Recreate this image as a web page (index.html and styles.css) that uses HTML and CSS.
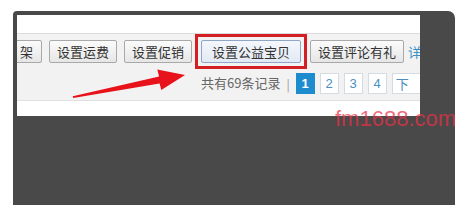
FILE: index.html
```html
<!DOCTYPE html>
<html>
<head>
<meta charset="utf-8">
<link rel="stylesheet" href="styles.css">
</head>
<body>
<div class="frame">
  <div class="panel">
    <div class="spacer"></div>
    <div class="band">
      <div class="toolbar">
        <span class="btn btn-cut">架</span>
        <span class="btn">设置运费</span>
        <span class="btn">设置促销</span>
        <span class="mark"><span class="btn btn-on">设置公益宝贝</span></span>
        <span class="btn">设置评论有礼</span>
        <span class="link">详</span>
      </div>
      <div class="pager">
        <span class="total">共有69条记录</span>
        <span class="sep">|</span>
        <span class="page page-on">1</span>
        <span class="page">2</span>
        <span class="page">3</span>
        <span class="page">4</span>
        <span class="page page-next">下</span>
      </div>
    </div>
  </div>
</div>
<svg class="arrow" width="466" height="205" viewBox="0 0 466 205">
  <polygon fill="#e8121a" points="73.2,98 159.6,83.4 161.3,90 185,75 157.3,69.6 159.1,76.4 72.8,96.2"/>
</svg>
<div class="watermark">fm1688.com</div>
</body>
</html>
```

FILE: styles.css
```css
html, body {
  margin: 0;
  padding: 0;
  background: #ffffff;
  width: 466px;
  height: 205px;
  overflow: hidden;
  font-family: "Noto Sans CJK SC", "Liberation Sans", sans-serif;
}

.frame {
  margin: 11px 0 0 13px;
  width: 403px;
  height: 190px;
  padding: 4px 35px 0 4px;
  background: #494949;
  border-radius: 4px 7px 0 0;
}

.panel {
  width: 403px;
  height: 101px;
  background: #ffffff;
  overflow: hidden;
}

.spacer {
  height: 18px;
}

.band {
  height: 66px;
  background: #f2f2f2;
  border-top: 1px solid #dcdcdc;
  border-bottom: 1px solid #e0e0e0;
}

.toolbar {
  display: flex;
  align-items: flex-start;
  gap: 7px;
  margin-left: -4px;
  padding-top: 6px;
  height: 26px;
  white-space: nowrap;
}

.btn {
  display: inline-flex;
  align-items: center;
  height: 21px;
  padding: 0 7px;
  border: 1px solid #a9a9a9;
  border-radius: 2px;
  background: linear-gradient(#fbfbfb, #e6e6e6);
  color: #333333;
  font-size: 13px;
  line-height: 21px;
}

.btn-cut {
  padding: 0 8px 0 6px;
}

.btn-on {
  border-color: #8fa6c9;
  background: linear-gradient(#f4f7fc, #e3e9f3);
  padding: 0 10px;
}

.mark {
  display: inline-flex;
  margin: -6px -4px;
  padding: 3px;
  border: 3px solid #d21f24;
}

.link {
  color: #3a8fc7;
  font-size: 13px;
  line-height: 23px;
  margin-left: -3px;
}

.pager {
  display: flex;
  align-items: center;
  gap: 5px;
  padding-left: 184px;
  height: 34px;
  white-space: nowrap;
}

.total {
  color: #666666;
  font-size: 13px;
  line-height: 20px;
}

.sep {
  color: #999999;
  font-size: 12px;
  margin: 0 1px 0 1px;
}

.page {
  display: inline-flex;
  align-items: center;
  justify-content: center;
  min-width: 17px;
  height: 19px;
  border: 1px solid #d5dbe3;
  background: #ffffff;
  color: #4a8fc4;
  font-family: "Liberation Sans", sans-serif;
  font-size: 13px;
}

.page-on {
  background: #1d8ccf;
  border-color: #1d8ccf;
  color: #ffffff;
  font-weight: bold;
}

.page-next {
  justify-content: flex-start;
  padding: 0 20px 0 3px;
  font-family: "Noto Sans CJK SC", sans-serif;
}

.arrow {
  position: absolute;
  left: 0;
  top: 0;
}

.watermark {
  position: absolute;
  left: 335px;
  top: 106px;
  font-family: "Liberation Sans", sans-serif;
  font-size: 22px;
  line-height: 26px;
  color: rgba(236, 48, 72, 0.72);
}
```
